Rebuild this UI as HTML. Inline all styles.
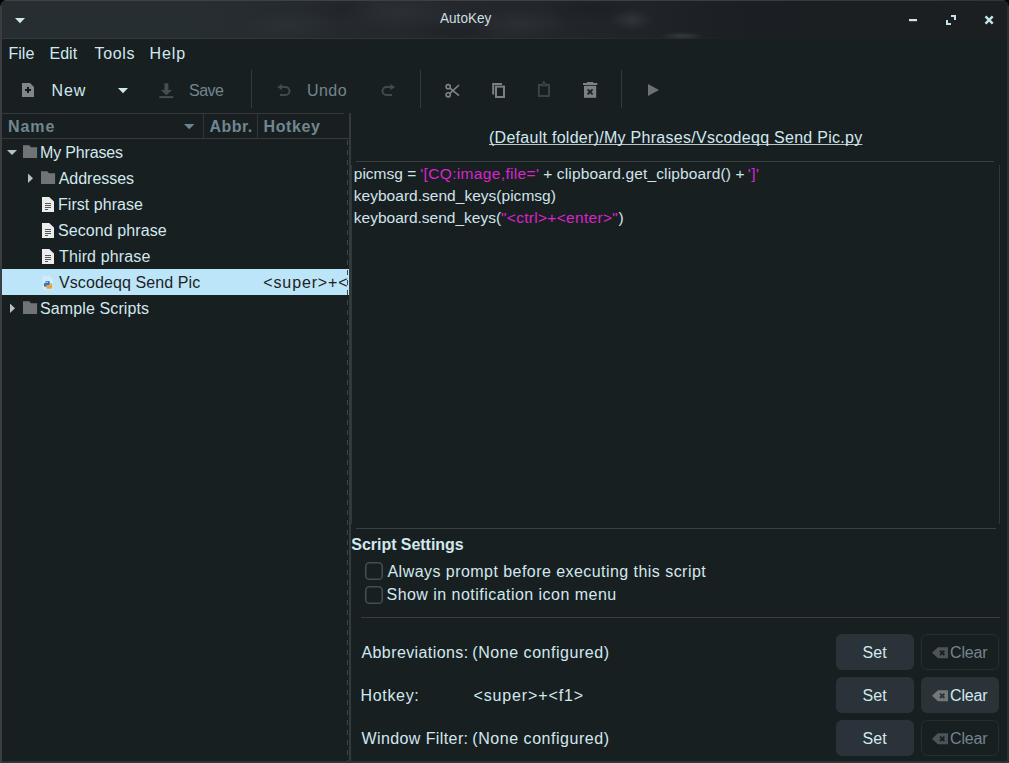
<!DOCTYPE html>
<html lang="en">
<head>
<meta charset="utf-8">
<title>AutoKey</title>
<style>
html,body{margin:0;padding:0;}
body{width:1009px;height:763px;overflow:hidden;background:#000;position:relative;
  font-family:"Liberation Sans","Noto Sans CJK SC",sans-serif;font-size:16px;color:#d2e8ef;}
#win{position:absolute;left:0;top:0;width:1009px;height:763px;background:#181f21;overflow:hidden;
  border-top-left-radius:7px;border-top-right-radius:7px;}
.abs{position:absolute;}
.grp{position:absolute;left:0;top:0;width:0;height:0;margin:0;padding:0;}
code.t{font-family:inherit;}
.t{position:absolute;white-space:pre;line-height:20px;height:20px;}
.b{font-weight:bold;}
.ttl{color:#d0dde1;transform:scaleX(.876);transform-origin:0 0;}
#r6h{width:85.2px;overflow:hidden;}
.ul{text-decoration:underline;text-decoration-thickness:1.4px;text-underline-offset:1.3px;text-decoration-skip-ink:none;text-decoration-color:#b9c7cc;}
.dis{color:#73858e;}
.hd{color:#72868f;font-weight:bold;}
.code{color:#d2e3ea;}
.str{color:#d925cc;}
svg{position:absolute;overflow:visible;}
/* title bar */
#titlebar{left:0;top:0;width:1009px;height:39px;
  background:
   radial-gradient(ellipse 22px 11px at 632px 20px, rgba(70,78,82,.38), rgba(70,78,82,0) 100%),
   radial-gradient(ellipse 22px 4px at 682px 36px, rgba(90,98,102,.38), rgba(90,98,102,0) 100%),
   radial-gradient(ellipse 50px 16px at 520px 24px, rgba(64,70,74,.28), rgba(64,70,74,0) 100%),
   radial-gradient(ellipse 60px 18px at 400px 12px, rgba(60,64,70,.30), rgba(60,64,70,0) 100%),
   radial-gradient(ellipse 50px 16px at 290px 26px, rgba(56,62,66,.30), rgba(56,62,66,0) 100%),
   radial-gradient(ellipse 45px 14px at 590px 8px, rgba(20,22,26,.35), rgba(20,22,26,0) 100%),
   radial-gradient(ellipse 45px 14px at 455px 32px, rgba(20,22,26,.30), rgba(20,22,26,0) 100%),
   radial-gradient(ellipse 40px 12px at 345px 10px, rgba(20,22,26,.25), rgba(20,22,26,0) 100%),
   linear-gradient(90deg,#272e31 0px,#272e31 200px,#252a2e 290px,#24282c 450px,#22262b 560px,#20242a 640px,#1d2125 700px,#1b1f23 760px,#1b1f22 1009px);}
#tb-bot{left:0;top:38px;width:1009px;height:1px;background:linear-gradient(90deg,rgba(60,70,74,.55) 0px,rgba(60,70,74,.35) 500px,rgba(60,70,74,0) 760px);}
#tb-top{left:0;top:0;width:1009px;height:1px;background:linear-gradient(90deg,#3d4347 0px,#3b4045 600px,#30353a 1009px);}
#edge-l{left:0;top:6px;width:2px;height:757px;background:#393e42;}
#edge-r{left:1007px;top:6px;width:2px;height:757px;background:#293034;}
#edge-b{left:2px;top:761px;width:1007px;height:2px;background:#2c3437;}
/* tree */
#tree{left:2px;top:113px;width:346px;height:650px;background:#181f21;}
#clip{left:2px;top:269px;width:346px;height:26px;overflow:hidden;}
#thead{left:2px;top:113px;width:342px;height:25px;background:#181f21;border-top:1px solid #343a3e;box-sizing:border-box;}
#thead2{left:2px;top:138px;width:347px;height:1px;background:#343a3e;}
.colsep{top:114px;width:1px;height:24px;background:#2f3539;}
#sel{left:2px;top:269px;width:346.7px;height:26px;background:#bce5fa;}
.seltxt{color:#1b2326;}
#vline{left:349px;top:113px;width:2px;height:650px;background:#333b3d;}
#vline2{left:351px;top:165px;width:1px;height:359px;background:#30373a;}
#dash{left:346.6px;top:140px;width:1.7px;height:623px;background:repeating-linear-gradient(180deg,#3d4548 0px,#3d4548 5px,transparent 5px,transparent 10px);}
.hline{height:1px;background:#383e42;}
/* check boxes */
.cb{width:18px;height:18px;box-sizing:border-box;border:1.5px solid #444c50;border-radius:4.5px;background:#181f21;}
/* buttons */
.btn{height:36px;border-radius:6px;background:#2a3338;box-sizing:border-box;}
.btn.off{background:#181f21;border:1px solid #262d30;}
</style>
</head>
<body>
<div id="win">
  <div id="titlebar" class="abs"></div>
  <div id="tb-top" class="abs"></div>
  <div id="tb-bot" class="abs"></div>
  <!-- toolbar separators -->
<div class="abs" style="left:251px;top:70px;width:1px;height:38px;background:#323a3c"></div>
<div class="abs" style="left:420px;top:70px;width:1px;height:38px;background:#323a3c"></div>
<div class="abs" style="left:621px;top:70px;width:1px;height:38px;background:#323a3c"></div>
<!-- tree -->
<div id="tree" class="abs"></div>
<div id="thead" class="abs"></div><div id="thead2" class="abs"></div>
<div class="abs colsep" style="left:203px"></div>
<div class="abs colsep" style="left:257px"></div>
<div id="sel" class="abs"></div>
<div id="dash" class="abs"></div>
<div id="vline" class="abs"></div>
<div id="vline2" class="abs"></div>
<!-- editor frame -->
<div class="abs hline" style="left:356px;top:161px;width:638px;background:#394043"></div>
<div class="abs hline" style="left:356px;top:528px;width:640px;background:#394043"></div>
<div class="abs" style="left:999px;top:165px;width:1px;height:359px;background:#30373a"></div>
<div class="abs hline" style="left:361px;top:617px;width:639px"></div>
<!-- checkboxes -->
<svg width="18" height="18" viewBox="0 0 18 18" style="left:365px;top:562px"><rect x="0.75" y="0.75" width="16.5" height="16.5" rx="3.6" fill="#181f21" stroke="#464e52" stroke-width="1.5"/></svg>
<svg width="18" height="18" viewBox="0 0 18 18" style="left:365px;top:586px"><rect x="0.75" y="0.75" width="16.5" height="16.5" rx="3.6" fill="#181f21" stroke="#464e52" stroke-width="1.5"/></svg>
<!-- buttons -->
<div class="abs btn" style="left:836px;top:634px;width:78px"></div>
<div class="abs btn off" style="left:921px;top:634px;width:78px"></div>
<div class="abs btn" style="left:836px;top:677px;width:78px"></div>
<div class="abs btn" style="left:921px;top:677px;width:78px"></div>
<div class="abs btn" style="left:836px;top:720px;width:78px"></div>
<div class="abs btn off" style="left:921px;top:720px;width:78px"></div>
<!-- icons -->
<svg width="1009" height="763" viewBox="0 0 1009 763" style="left:0;top:0">
 <!-- title bar controls -->
 <polygon points="15,18 25,18 20,23.2" fill="#cfe6ee"/>
 <rect x="909" y="19" width="8" height="2.2" fill="#d3e4e8"/>
 <path d="M951 16H955V20" fill="none" stroke="#c6e2e4" stroke-width="2"/>
 <path d="M947 20V24H951" fill="none" stroke="#c6e2e4" stroke-width="2"/>
 <path d="M985.5 16.3L992.7 23.7M992.7 16.3L985.5 23.7" fill="none" stroke="#bfe6e6" stroke-width="2.4"/>
 <!-- New -->
 <polygon points="22,83 30,83 34,87 34,97 22,97" fill="#828688"/>
 <rect x="25" y="89" width="6" height="2" fill="#15191b"/><rect x="27" y="87" width="2" height="6" fill="#15191b"/>
 <polygon points="118,88 128,88 123,93.2" fill="#cfe8ef"/>
 <!-- Save (disabled) -->
 <path d="M164.4 83.2H168.4V90H172L166.4 95.2L160.8 90H164.4Z" fill="#454d50"/>
 <rect x="159.4" y="96.1" width="13.8" height="2" fill="#454d50"/>
 <!-- Undo / Redo (disabled) -->
 <path d="M281 87H285.5A4 4 0 0 1 285.5 95H280" fill="none" stroke="#42494d" stroke-width="2"/>
 <polygon points="282,84 282,90.2 277.3,87.1" fill="#42494d"/>
 <path d="M391 87H386.5A4 4 0 0 0 386.5 95H392" fill="none" stroke="#42494d" stroke-width="2"/>
 <polygon points="390.2,84 390.2,90.2 395.2,87.1" fill="#42494d"/>
 <!-- Cut -->
 <g fill="none" stroke="#7e8386" stroke-width="1.6">
  <circle cx="448.2" cy="86.7" r="2.1"/><circle cx="448.2" cy="94.8" r="2.1"/>
  <path d="M449.9 88.1L459 95.6M449.9 93.4L459 85"/>
 </g>
 <!-- Copy -->
 <path d="M493.2 94.4V84.1H502" fill="none" stroke="#7a7f82" stroke-width="2"/>
 <rect x="496" y="86.6" width="8" height="10.4" fill="none" stroke="#7a7f82" stroke-width="2"/>
 <!-- Paste (disabled) -->
 <rect x="538.8" y="84.8" width="10.2" height="11.2" fill="none" stroke="#3f464a" stroke-width="1.8"/>
 <path d="M541.6 85.6L543.9 81.8L546.2 85.6Z" fill="#181f21" stroke="#3f464a" stroke-width="1.4"/>
 <!-- Delete -->
 <rect x="583" y="83" width="14.3" height="2" fill="#7c8184"/><rect x="587" y="82" width="6.3" height="1.2" fill="#7c8184"/>
 <rect x="584" y="85.8" width="12.2" height="12" fill="#7c8184"/>
 <path d="M587.6 89.3L592.6 94.3M592.6 89.3L587.6 94.3" stroke="#181f21" stroke-width="1.8" fill="none"/>
 <!-- Play -->
 <polygon points="648,84 659,90 648,96" fill="#6b7174"/>
 <!-- header sort arrow -->
 <polygon points="184,124 194.4,124 189.2,129.2" fill="#6f848d"/>
 <!-- tree expanders -->
 <polygon points="7,150 17,150 12,155" fill="#b5c1c7"/>
 <polygon points="28,173.4 33,178.2 28,183" fill="#b5c1c7"/>
 <polygon points="10,303.4 15,308.2 10,313" fill="#b5c1c7"/>
 <!-- folders -->
 <path d="M23 145.2H29.3L31 147.2H37.1V158.1H23Z" fill="#707476"/>
 <path d="M41 171.2H47.3L49 173.2H55.1V184.1H41Z" fill="#707476"/>
 <path d="M23 301.2H29.3L31 303.2H37.1V314.1H23Z" fill="#707476"/>
 <!-- documents -->
 <g id="doc1">
  <polygon points="42,197 49.2,197 54,201.4 54,212 42,212" fill="#ececec"/>
  <path d="M45 203.5H51M45 205.5H51M45 207.5H51M45 209.5H48" stroke="#555" stroke-width="1" fill="none"/>
 </g>
 <g transform="translate(0,26)">
  <polygon points="42,197 49.2,197 54,201.4 54,212 42,212" fill="#ececec"/>
  <path d="M45 203.5H51M45 205.5H51M45 207.5H51M45 209.5H48" stroke="#555" stroke-width="1" fill="none"/>
 </g>
 <g transform="translate(0,52)">
  <polygon points="42,197 49.2,197 54,201.4 54,212 42,212" fill="#ececec"/>
  <path d="M45 203.5H51M45 205.5H51M45 207.5H51M45 209.5H48" stroke="#555" stroke-width="1" fill="none"/>
 </g>
 <!-- python script icon -->
 <polygon points="42.5,276 49.5,276 53,279.5 53,290 42.5,290" fill="#ffffff" fill-opacity="0.28"/>
 <path d="M45.6 281.1H48.4Q49.8 281.1 49.8 282.5V284.2Q49.8 285.4 48.6 285.4H46.6V286.7H45.2Q43.9 286.7 43.9 285.4V283.9Q43.9 282.9 45 282.9H45.6Z" fill="#3674c0"/>
 <path d="M50.4 283.3H51Q52.2 283.3 52.2 284.6V287.4Q52.2 288.7 51 288.7H47.4Q46.2 288.7 46.2 287.5V286.6Q46.2 285.6 47.3 285.6H49.3Q50.4 285.6 50.4 284.5Z" fill="#f0a32c"/>
 <circle cx="47" cy="282.3" r="0.75" fill="#eef4fa"/>
 <!-- clear icons -->
 <g id="clr">
  <path d="M932 652.8L937.9 647.2H948V658.3H937.9Z" fill="#4d5457"/>
  <path d="M940 650.6L944.4 655M944.4 650.6L940 655" stroke="#181f21" stroke-width="1.9" fill="none"/>
 </g>
 <g>
  <path d="M932 695.8L937.9 690.2H948V701.3H937.9Z" fill="#73787b"/>
  <path d="M940 693.6L944.4 698M944.4 693.6L940 698" stroke="#2a3338" stroke-width="1.9" fill="none"/>
 </g>
 <g transform="translate(0,86)">
  <path d="M932 652.8L937.9 647.2H948V658.3H937.9Z" fill="#4d5457"/>
  <path d="M940 650.6L944.4 655M944.4 650.6L940 655" stroke="#181f21" stroke-width="1.9" fill="none"/>
 </g>
</svg>

<header id="titlebar-text" class="grp">
  <span id="ttl" class="t ttl" style="left:440.00px;top:8px;letter-spacing:0.000px;font-size:15.5px;">AutoKey</span>
</header>
<nav id="menubar" class="grp">
  <span id="m1" class="t " style="left:8.50px;top:44px;letter-spacing:0.000px;">File</span>
  <span id="m2" class="t " style="left:49.50px;top:44px;letter-spacing:0.000px;">Edit</span>
  <span id="m3" class="t " style="left:94.50px;top:44px;letter-spacing:0.675px;">Tools</span>
  <span id="m4" class="t " style="left:149.60px;top:44px;letter-spacing:0.900px;">Help</span>
</nav>
<div id="toolbar-labels" class="grp">
  <span id="tn" class="t " style="left:51.50px;top:81px;letter-spacing:0.850px;">New</span>
  <span id="ts" class="t dis" style="left:189.00px;top:81px;letter-spacing:-0.500px;">Save</span>
  <span id="tu" class="t dis" style="left:307.00px;top:81px;letter-spacing:0.433px;">Undo</span>
</div>
<div id="tree-header" class="grp">
  <span id="h1" class="t hd" style="left:8.00px;top:117px;letter-spacing:0.900px;">Name</span>
  <span id="h2" class="t hd" style="left:209.50px;top:117px;letter-spacing:0.425px;">Abbr.</span>
  <span id="h3" class="t hd" style="left:263.50px;top:117px;letter-spacing:0.600px;">Hotkey</span>
</div>
<div id="tree-rows" class="grp">
  <span id="r1" class="t " style="left:40.00px;top:143px;letter-spacing:-0.167px;">My Phrases</span>
  <span id="r2" class="t " style="left:58.70px;top:169px;letter-spacing:-0.025px;">Addresses</span>
  <span id="r3" class="t " style="left:58.00px;top:195px;letter-spacing:0.045px;">First phrase</span>
  <span id="r4" class="t " style="left:58.00px;top:221px;letter-spacing:0.083px;">Second phrase</span>
  <span id="r5" class="t " style="left:59.00px;top:247px;letter-spacing:0.136px;">Third phrase</span>
  <span id="r6" class="t seltxt" style="left:59.00px;top:273px;letter-spacing:0.094px;">Vscodeqq Send Pic</span>
  <span id="r6h" class="t seltxt" style="left:263.30px;top:273px;letter-spacing:0.864px;">&lt;super&gt;+&lt;f1&gt;</span>
  <span id="r7" class="t " style="left:40.00px;top:299px;letter-spacing:0.115px;">Sample Scripts</span>
</div>
<div id="path-label" class="grp">
  <span id="pl" class="t ul" style="left:489.00px;top:128px;letter-spacing:0.277px;">(Default folder)/My Phrases/Vscodeqq Send Pic.py</span>
</div>
<div id="editor" class="grp">
  <code id="cd1a" class="t code" style="left:353.80px;top:164px;letter-spacing:0.000px;font-size:15.5px;">picmsg = </code>
  <code id="cd1b" class="t str" style="left:420.25px;top:164px;letter-spacing:0.344px;font-size:15.5px;">'[CQ:image,file='</code>
  <code id="cd1c" class="t code" style="left:538.75px;top:164px;letter-spacing:0.143px;font-size:15.5px;"> + clipboard.get_clipboard() + </code>
  <code id="cd1d" class="t str" style="left:747.75px;top:164px;letter-spacing:0.500px;font-size:15.5px;">']'</code>
  <code id="cd2" class="t code" style="left:353.80px;top:186px;letter-spacing:0.020px;font-size:15.5px;">keyboard.send_keys(picmsg)</code>
  <code id="cd3a" class="t code" style="left:353.80px;top:208px;letter-spacing:0.000px;font-size:15.5px;">keyboard.send_keys(</code>
  <code id="cd3b" class="t str" style="left:501.00px;top:208px;letter-spacing:0.300px;font-size:15.5px;">"&lt;ctrl&gt;+&lt;enter&gt;"</code>
  <code id="cd3c" class="t code" style="left:618.50px;top:208px;letter-spacing:0.000px;font-size:15.5px;">)</code>
</div>
<section id="script-settings" class="grp">
  <span id="ss" class="t b" style="left:351.30px;top:535px;letter-spacing:-0.036px;">Script Settings</span>
  <span id="c1" class="t " style="left:387.50px;top:562px;letter-spacing:0.451px;">Always prompt before executing this script</span>
  <span id="c2" class="t " style="left:386.50px;top:585px;letter-spacing:0.466px;">Show in notification icon menu</span>
</section>
<section id="settings-rows" class="grp">
  <span id="l1" class="t " style="left:361.50px;top:643px;letter-spacing:0.400px;">Abbreviations:</span>
  <span id="v1" class="t " style="left:472.30px;top:643px;letter-spacing:0.544px;">(None configured)</span>
  <span id="s1" class="t " style="left:862.50px;top:643px;letter-spacing:0.100px;">Set</span>
  <span id="k1" class="t dis" style="left:950.00px;top:643px;letter-spacing:-0.150px;">Clear</span>
  <span id="l2" class="t " style="left:360.50px;top:686px;letter-spacing:0.667px;">Hotkey:</span>
  <span id="v2" class="t " style="left:473.50px;top:686px;letter-spacing:0.864px;">&lt;super&gt;+&lt;f1&gt;</span>
  <span id="s2" class="t " style="left:862.50px;top:686px;letter-spacing:0.100px;">Set</span>
  <span id="k2" class="t " style="left:950.00px;top:686px;letter-spacing:-0.150px;">Clear</span>
  <span id="l3" class="t " style="left:361.50px;top:729px;letter-spacing:0.400px;">Window Filter:</span>
  <span id="v3" class="t " style="left:472.30px;top:729px;letter-spacing:0.544px;">(None configured)</span>
  <span id="s3" class="t " style="left:862.50px;top:729px;letter-spacing:0.100px;">Set</span>
  <span id="k3" class="t dis" style="left:950.00px;top:729px;letter-spacing:-0.150px;">Clear</span>
</section>
  <div id="edge-l" class="abs"></div>
  <div id="edge-r" class="abs"></div>
  <div id="edge-b" class="abs"></div>
</div>
</body>
</html>
